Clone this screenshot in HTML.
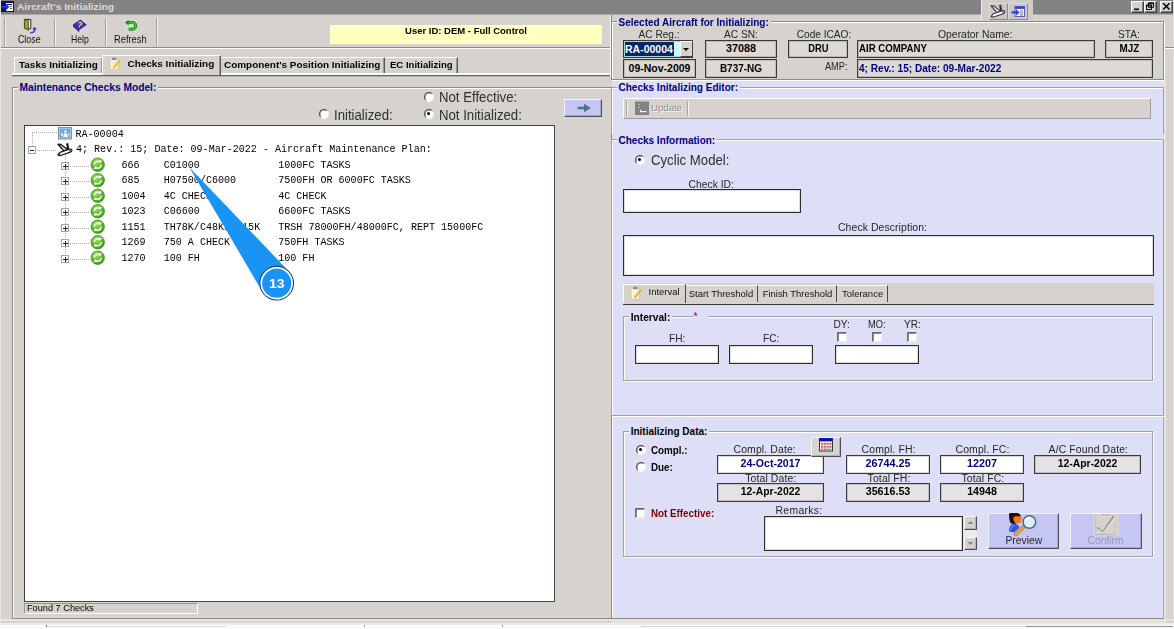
<!DOCTYPE html>
<html>
<head>
<meta charset="utf-8">
<title>Aircraft's Initializing</title>
<style>
html,body{margin:0;padding:0;}
body{opacity:0.999;width:1174px;height:629px;overflow:hidden;position:relative;background:#d6d3ce;font-family:"Liberation Sans",sans-serif;font-size:10px;color:#000;}
.a{position:absolute;box-sizing:border-box;}
.t{position:absolute;white-space:pre;line-height:12px;}
.b{font-weight:bold;}
.nv{color:#000080;}
.lbl{font-size:10.15px;color:#262626;}
.big{font-size:13.2px;color:#303030;transform:scaleY(1.12);transform-origin:0 78%;}
.mono{font-family:"Liberation Mono",monospace;font-size:10.05px;line-height:12px;color:#000;}
.fld{position:absolute;box-sizing:border-box;border:1px solid #3a3a3a;box-shadow:inset 0 0 0 1px rgba(40,40,40,0.18);background:#dddad5;font-weight:bold;font-size:10.3px;text-align:center;white-space:pre;overflow:hidden;}
.fldw{background:#fff;color:#000080;}
.inp{position:absolute;box-sizing:border-box;border:1px solid #2c2c2c;background:#fff;box-shadow:inset 0 0 0 1px rgba(40,40,40,0.16);}
.grp{position:absolute;box-sizing:border-box;border:1px solid #8c8a86;box-shadow:1px 1px 0 #fff, inset 1px 1px 0 #fff;}
.radio{position:absolute;width:10px;height:10px;border-radius:50%;box-sizing:border-box;background:#fff;border:1.4px solid #4a4a4a;border-right-color:#f4f4f4;border-bottom-color:#f4f4f4;transform:rotate(0deg);box-shadow:inset 0.6px 0.6px 0 #8a8a8a;}
.radio.on:after{content:"";position:absolute;left:2px;top:2px;width:3.2px;height:3.2px;border-radius:50%;background:#000;}
.chk{position:absolute;width:10px;height:10px;box-sizing:border-box;background:#fff;border:1px solid #6c6c6c;border-right-color:#ececf4;border-bottom-color:#ececf4;box-shadow:inset 1px 1px 0 rgba(40,40,40,0.55);}
.vsep{position:absolute;width:1px;background:#9e9c98;box-shadow:1px 0 0 #f6f5f3;}
.hsep{position:absolute;height:1px;background:#8c8a86;box-shadow:0 1px 0 #fff;}
.btn{position:absolute;box-sizing:border-box;background:#c6c6f5;border:1px solid #f4f4fc;border-right-color:#4c4c5a;border-bottom-color:#4c4c5a;box-shadow:inset -1px -1px 0 rgba(110,110,140,0.35);}
.tab{position:absolute;box-sizing:border-box;font-weight:bold;font-size:9.95px;white-space:pre;line-height:12px;}
.tb{font-size:10.2px;transform-origin:0 0;color:#111;}
.tabbox{border:1px solid #fff;border-right-color:#5a5854;border-bottom:none;box-shadow:inset -1px 0 0 #9a9894;}
.tabbox.sel{background:#d6d3ce;}
.wc{position:absolute;top:1px;width:13px;height:12px;box-sizing:border-box;background:#d6d3ce;border:1px solid #fff;border-right-color:#404040;border-bottom-color:#404040;box-shadow:inset -1px -1px 0 #808080;}
.wc svg{position:absolute;left:0;top:0;}
.bx{font-size:10.9px !important;transform:scaleX(0.9);transform-origin:0 50%;}
.l2{font-size:10.45px;letter-spacing:0.12px;}
.lv{border-color:#a0a0aa;}
</style>
</head>
<body>
<!-- TITLE BAR -->
<div class="a" id="titlebar" style="left:0;top:0;width:1174px;height:14px;background:#848284;border-bottom:1px solid #aaa8a6;height:15px;"></div>
<svg class="a" style="left:1px;top:1px;" width="13" height="11" viewBox="0 0 13 11"><rect x="0" y="0" width="13" height="11" fill="#10106a"/><rect x="5" y="2" width="7" height="8" fill="#fff"/><rect x="6" y="3" width="5" height="1" fill="#10106a"/><rect x="9" y="5" width="2" height="1" fill="#555"/><rect x="9" y="7" width="2" height="1" fill="#555"/><path d="M0.800 4.800h4.200V2.800l3.400 3.200-3.400 3.200V7.200H0.800z" fill="#1c30d8"/></svg>
<div class="t b" style="left:17px;top:0px;font-size:9.700px;line-height:14px;color:#dedcd8;transform:scaleX(1.052);transform-origin:0 0;">Aircraft's Initializing</div>

<div class="a" style="left:1173px;top:0;width:1px;height:625px;background:#e4e2e0;"></div>
<!-- TOOLBAR -->
<div class="hsep" style="left:0;top:47px;width:611px;"></div>
<div class="hsep" style="left:1165px;top:47px;width:9px;"></div>
<div class="vsep" style="left:4px;top:18px;height:28px;"></div>
<div class="vsep" style="left:54px;top:18px;height:28px;"></div>
<div class="vsep" style="left:105px;top:18px;height:28px;"></div>
<div class="vsep" style="left:156px;top:18px;height:28px;"></div>
<div class="t tb" style="left:17.5px;top:34px;transform:scaleX(0.865);">Close</div>
<div class="t tb" style="left:70.8px;top:34px;transform:scaleX(0.85);">Help</div>
<div class="t tb" style="left:114px;top:34px;transform:scaleX(0.915);">Refresh</div>


<svg class="a" style="left:20px;top:17px;" width="20" height="17" viewBox="20 17 20 17"><path d="M25 19.4h5.800v9.200h-5.800z" fill="#fbfbf6" stroke="#161616" stroke-width="0.900"/><path d="M24.400 19.200l4 1.300v9.900l-4-2.400z" fill="#8e8e1e" stroke="#3c3c08" stroke-width="0.700" stroke-linejoin="round"/><path d="M25.200 20.600l2.400 0.800v7.600l-2.400-1.400z" fill="#a4a432"/><path d="M30.200 32q3.400 0.400 3.600-2.600h-1.500l2.300-2.600 2.300 2.600h-1.500q-0.200 4.200-5.200 3.800z" fill="#2e3ed2"/></svg>
<svg class="a" style="left:70px;top:17px;" width="20" height="17" viewBox="70 17 20 17"><path d="M73 24.5l7.5-5 6.5 5.5-7.5 5.2z" fill="#3a22a8"/><path d="M73 24.5l6.5 5.7v2.2l-6.5-5.8z" fill="#2a1880"/><path d="M79.5 30.2l7.5-5.2v2l-7.5 5.4z" fill="#f4f4fc"/><path d="M79.5 31.6l7.5-5.2" stroke="#8a8ab0" stroke-width="0.5"/><path d="M75.5 24.2l5-3.4 4.4 3.7-5 3.5z" fill="#4c34c4"/><text x="77.600" y="27.600" font-family="Liberation Sans, sans-serif" font-weight="bold" font-size="8.2" fill="#ffe838" transform="rotate(10 80 24)">?</text></svg>
<svg class="a" style="left:123px;top:18px;" width="16" height="15" viewBox="123 18 16 15"><rect x="124" y="19" width="13.6" height="13.4" fill="#dad7d2"/><path d="M127.5 22.6h5a3.3 3.3 0 0 1 0 6.6h-3.8" fill="none" stroke="#1a7a1a" stroke-width="3"/><path d="M127.5 22.6h5a3.3 3.3 0 0 1 0 6.6h-3.8" fill="none" stroke="#2ed02e" stroke-width="1.6"/><path d="M125 22.6l3.6-2.8v5.6z" fill="#1a8a1a"/></svg>
<!-- yellow user box -->
<div class="a" style="left:330px;top:25px;width:272px;height:19px;background:#ffffc0;"></div>
<div class="t b" style="left:330px;top:25px;width:272px;text-align:center;font-size:9.5px;">User ID: DEM - Full Control</div>

<!-- MAIN TABS -->
<div class="a" style="left:12px;top:73px;width:599px;height:2px;background:#fff;border-bottom:1px solid #62605c;box-sizing:content-box;box-shadow:0 1px 0 #b4b2ae;"></div>
<div class="a tabbox" style="left:14px;top:57px;width:89px;height:16px;"></div>
<div class="a tabbox sel" style="left:102px;top:55px;width:119px;height:20px;"></div>
<div class="a tabbox" style="left:221px;top:57px;width:164px;height:16px;border-left:none;"></div>
<div class="a tabbox" style="left:385px;top:57px;width:73px;height:16px;border-left:none;"></div>
<div class="tab" style="left:19px;top:59px;">Tasks Initializing</div>
<div class="tab" style="left:127.5px;top:58px;">Checks Initializing</div>
<div class="tab" style="left:224px;top:59px;">Component's Position Initializing</div>
<div class="tab" style="left:390px;top:59px;font-size:9.55px;">EC Initializing</div>

<svg class="a" style="left:109px;top:56.5px;" width="12" height="13" viewBox="0 0 12 13"><rect x="1" y="2" width="8.5" height="10.5" fill="#fdf6e0" stroke="#e8c880" stroke-width="1"/><rect x="3" y="0.8" width="4.5" height="2.2" fill="#8a8a9a"/><path d="M4.5 9.5l5.5-6.5 1.4 1.1-5.4 6.6-2 0.6z" fill="#f0c040" stroke="#d8a020" stroke-width="0.4"/><path d="M3 7h3M3 5h4" stroke="#e0d0a0" stroke-width="0.6"/></svg>
<!-- LEFT GROUP -->
<div class="grp" style="left:12px;top:87px;width:600px;height:532px;"></div>
<div class="t b nv" style="left:17.5px;top:82px;font-size:10.22px;background:#d6d3ce;padding:0 2px;">Maintenance Checks Model:</div>

<div class="radio" style="left:424px;top:92px;"></div>
<div class="t big" style="left:439px;top:92px;">Not Effective:</div>
<div class="radio" style="left:319px;top:109px;"></div>
<div class="t big" style="left:334px;top:110px;">Initialized:</div>
<div class="radio on" style="left:424px;top:109px;"></div>
<div class="t big" style="left:439px;top:110px;">Not Initialized:</div>
<div class="btn" style="left:564px;top:99px;width:38px;height:18px;"><svg width="36" height="16" style="position:absolute;left:0;top:0"><path d="M12.5 6.8h6.5V3.8l7 4.2-7 4.2V9.2h-6.5z" fill="#4a7492"/></svg></div>

<!-- TREE -->
<div class="a" id="tree" style="left:24px;top:125px;width:531px;height:477px;background:#fff;border:1px solid #404040;border-right-color:#484848;border-bottom-color:#484848;"></div>
<div class="t mono" style="left:75.5px;top:129px;">RA-00004</div>
<div class="t mono" style="left:76px;top:144px;">4; Rev.: 15; Date: 09-Mar-2022 - Aircraft Maintenance Plan:</div>
<div class="t mono" style="left:121.5px;top:160px;">666    C01000             1000FC TASKS</div>
<div class="t mono" style="left:121.5px;top:175px;">685    H07500/C6000       7500FH OR 6000FC TASKS</div>
<div class="t mono" style="left:121.5px;top:191px;">1004   4C CHECK           4C CHECK</div>
<div class="t mono" style="left:121.5px;top:206px;">1023   C06600             6600FC TASKS</div>
<div class="t mono" style="left:121.5px;top:222px;">1151   TH78K/C48K/RP15K   TRSH 78000FH/48000FC, REPT 15000FC</div>
<div class="t mono" style="left:121.5px;top:237px;">1269   750 A CHECK        750FH TASKS</div>
<div class="t mono" style="left:121.5px;top:253px;">1270   100 FH             100 FH</div>
<svg class="a" style="left:24px;top:125px;" width="200" height="150" viewBox="24 125 200 150">
<path d="M32 132.5H58 M32.5 133V147" stroke="#b0b0b0" stroke-width="1" stroke-dasharray="1 1" fill="none"/>
<path d="M37 150.5H57" stroke="#b0b0b0" stroke-width="1" stroke-dasharray="1 1" fill="none"/>
<path d="M65.5 155V258.4" stroke="#b0b0b0" stroke-width="1" stroke-dasharray="1 1" fill="none"/>
<path d="M70 166.5H90" stroke="#b0b0b0" stroke-width="1" stroke-dasharray="1 1" fill="none"/>
<path d="M70 181.5H90" stroke="#b0b0b0" stroke-width="1" stroke-dasharray="1 1" fill="none"/>
<path d="M70 197.5H90" stroke="#b0b0b0" stroke-width="1" stroke-dasharray="1 1" fill="none"/>
<path d="M70 212.5H90" stroke="#b0b0b0" stroke-width="1" stroke-dasharray="1 1" fill="none"/>
<path d="M70 228.5H90" stroke="#b0b0b0" stroke-width="1" stroke-dasharray="1 1" fill="none"/>
<path d="M70 243.5H90" stroke="#b0b0b0" stroke-width="1" stroke-dasharray="1 1" fill="none"/>
<path d="M70 259.5H90" stroke="#b0b0b0" stroke-width="1" stroke-dasharray="1 1" fill="none"/>
<rect x="28.5" y="146.5" width="7" height="7" fill="#fff" stroke="#a4a4a4"/><path d="M30 150.5h4" stroke="#222" stroke-width="1"/>
<rect x="61.5" y="162.5" width="7" height="7" fill="#fff" stroke="#a4a4a4"/><path d="M63 166.5h5M65.5 164v5" stroke="#222" stroke-width="1"/>
<rect x="61.5" y="177.5" width="7" height="7" fill="#fff" stroke="#a4a4a4"/><path d="M63 181.5h5M65.5 179v5" stroke="#222" stroke-width="1"/>
<rect x="61.5" y="193.5" width="7" height="7" fill="#fff" stroke="#a4a4a4"/><path d="M63 197.5h5M65.5 195v5" stroke="#222" stroke-width="1"/>
<rect x="61.5" y="208.5" width="7" height="7" fill="#fff" stroke="#a4a4a4"/><path d="M63 212.5h5M65.5 210v5" stroke="#222" stroke-width="1"/>
<rect x="61.5" y="224.5" width="7" height="7" fill="#fff" stroke="#a4a4a4"/><path d="M63 228.5h5M65.5 226v5" stroke="#222" stroke-width="1"/>
<rect x="61.5" y="239.5" width="7" height="7" fill="#fff" stroke="#a4a4a4"/><path d="M63 243.5h5M65.5 241v5" stroke="#222" stroke-width="1"/>
<rect x="61.5" y="255.5" width="7" height="7" fill="#fff" stroke="#a4a4a4"/><path d="M63 259.5h5M65.5 257v5" stroke="#222" stroke-width="1"/>
<rect x="58.5" y="127.5" width="13" height="11.5" fill="#9ec4ec" stroke="#8c8c94"/><rect x="60" y="129" width="10" height="8.5" fill="#6ea6e0"/><path d="M63 137l1.5-4h2l1.5 4z M64.3 130.5h2.4v2h-2.4z" fill="#f4f8ff"/><path d="M61 133h2v3h-2z M68 133.5h1.5v2h-1.5z" fill="#dce8f8"/>
<path d="M58 144.2l3 0.3 6.4 5-3.4 1.6z" fill="#dcdcdc" stroke="#161616" stroke-width="1.3" stroke-linejoin="round"/><path d="M66.2 143.4l2-0.4 1 6-2.2 0.8z" fill="#161616"/><path d="M58 155l2-2.6 9.2-3.3q2.8-0.4 2.7 1.3-0.2 1.4-2.2 1.9l-9.2 3.2z" fill="#fff" stroke="#161616" stroke-width="1.3" stroke-linejoin="round"/><circle cx="69.8" cy="150.6" r="1" fill="#5a4ab0"/>
<circle cx="97.7" cy="164.7" r="6.7" fill="url(#gg)" stroke="#3c8a1e" stroke-width="0.8"/>
<g transform="translate(97.7 164.7)" fill="none" stroke="#fff" stroke-width="1.5" stroke-linecap="round"><path d="M-3.4 -0.6a3.4 3.4 0 0 1 5.6 -2"/><path d="M3.4 0.6a3.4 3.4 0 0 1 -5.6 2"/></g>
<g transform="translate(97.7 164.7)" fill="#fff"><path d="M1.2 -4.6l3.2 0.6-2.4 2.4z"/><path d="M-1.2 4.6l-3.2-0.6 2.4-2.4z"/></g>
<circle cx="97.7" cy="180.2" r="6.7" fill="url(#gg)" stroke="#3c8a1e" stroke-width="0.8"/>
<g transform="translate(97.7 180.2)" fill="none" stroke="#fff" stroke-width="1.5" stroke-linecap="round"><path d="M-3.4 -0.6a3.4 3.4 0 0 1 5.6 -2"/><path d="M3.4 0.6a3.4 3.4 0 0 1 -5.6 2"/></g>
<g transform="translate(97.7 180.2)" fill="#fff"><path d="M1.2 -4.6l3.2 0.6-2.4 2.4z"/><path d="M-1.2 4.6l-3.2-0.6 2.4-2.4z"/></g>
<circle cx="97.7" cy="195.7" r="6.7" fill="url(#gg)" stroke="#3c8a1e" stroke-width="0.8"/>
<g transform="translate(97.7 195.7)" fill="none" stroke="#fff" stroke-width="1.5" stroke-linecap="round"><path d="M-3.4 -0.6a3.4 3.4 0 0 1 5.6 -2"/><path d="M3.4 0.6a3.4 3.4 0 0 1 -5.6 2"/></g>
<g transform="translate(97.7 195.7)" fill="#fff"><path d="M1.2 -4.6l3.2 0.6-2.4 2.4z"/><path d="M-1.2 4.6l-3.2-0.6 2.4-2.4z"/></g>
<circle cx="97.7" cy="211.2" r="6.7" fill="url(#gg)" stroke="#3c8a1e" stroke-width="0.8"/>
<g transform="translate(97.7 211.2)" fill="none" stroke="#fff" stroke-width="1.5" stroke-linecap="round"><path d="M-3.4 -0.6a3.4 3.4 0 0 1 5.6 -2"/><path d="M3.4 0.6a3.4 3.4 0 0 1 -5.6 2"/></g>
<g transform="translate(97.7 211.2)" fill="#fff"><path d="M1.2 -4.6l3.2 0.6-2.4 2.4z"/><path d="M-1.2 4.6l-3.2-0.6 2.4-2.4z"/></g>
<circle cx="97.7" cy="226.7" r="6.7" fill="url(#gg)" stroke="#3c8a1e" stroke-width="0.8"/>
<g transform="translate(97.7 226.7)" fill="none" stroke="#fff" stroke-width="1.5" stroke-linecap="round"><path d="M-3.4 -0.6a3.4 3.4 0 0 1 5.6 -2"/><path d="M3.4 0.6a3.4 3.4 0 0 1 -5.6 2"/></g>
<g transform="translate(97.7 226.7)" fill="#fff"><path d="M1.2 -4.6l3.2 0.6-2.4 2.4z"/><path d="M-1.2 4.6l-3.2-0.6 2.4-2.4z"/></g>
<circle cx="97.7" cy="242.2" r="6.7" fill="url(#gg)" stroke="#3c8a1e" stroke-width="0.8"/>
<g transform="translate(97.7 242.2)" fill="none" stroke="#fff" stroke-width="1.5" stroke-linecap="round"><path d="M-3.4 -0.6a3.4 3.4 0 0 1 5.6 -2"/><path d="M3.4 0.6a3.4 3.4 0 0 1 -5.6 2"/></g>
<g transform="translate(97.7 242.2)" fill="#fff"><path d="M1.2 -4.6l3.2 0.6-2.4 2.4z"/><path d="M-1.2 4.6l-3.2-0.6 2.4-2.4z"/></g>
<circle cx="97.7" cy="257.7" r="6.7" fill="url(#gg)" stroke="#3c8a1e" stroke-width="0.8"/>
<g transform="translate(97.7 257.7)" fill="none" stroke="#fff" stroke-width="1.5" stroke-linecap="round"><path d="M-3.4 -0.6a3.4 3.4 0 0 1 5.6 -2"/><path d="M3.4 0.6a3.4 3.4 0 0 1 -5.6 2"/></g>
<g transform="translate(97.7 257.7)" fill="#fff"><path d="M1.2 -4.6l3.2 0.6-2.4 2.4z"/><path d="M-1.2 4.6l-3.2-0.6 2.4-2.4z"/></g>
<defs><radialGradient id="gg" cx="0.4" cy="0.3" r="0.75"><stop offset="0" stop-color="#a6e25a"/><stop offset="0.55" stop-color="#5cbf2a"/><stop offset="1" stop-color="#3a9a1c"/></radialGradient></defs>
</svg>
<svg class="a" style="left:170px;top:150px;" width="140" height="160" viewBox="170 150 140 160"><path d="M189.3 167.2L290.2 272.8L263.2 293.2Z" fill="#1994f4"/><circle cx="276.7" cy="283.2" r="16.9" fill="#1994f4" stroke="#2a3a4a" stroke-width="1"/><circle cx="276.7" cy="283.2" r="15.4" fill="none" stroke="#fff" stroke-width="1.6"/><text x="276.7" y="287.8" text-anchor="middle" font-family="Liberation Sans, sans-serif" font-weight="bold" font-size="12.6" fill="#fff" textLength="15.6" lengthAdjust="spacingAndGlyphs">13</text></svg>

<!-- status -->
<div class="a" style="left:24px;top:603px;width:174px;height:11px;border:1px solid #9a9894;border-right-color:#fff;border-bottom-color:#fff;"></div>
<div class="t" style="left:27px;top:602px;font-size:9.2px;">Found 7 Checks</div>

<!-- RIGHT PANEL -->
<div class="a" id="rpanel" style="left:612px;top:80px;width:552px;height:538px;background:#dedef6;"></div>

<!-- RIGHT TOP: Selected aircraft -->
<div class="a" style="left:611px;top:15px;width:1px;height:8px;background:#8c8a86;"></div>
<div class="a" style="left:610px;top:15px;width:1px;height:62px;background:#f4f3f0;"></div>
<div class="a" style="left:981px;top:0;width:52px;height:21px;background:#d0cdc9;border-left:1px solid #f0eeec;"></div>
<div class="a" style="left:989px;top:3px;width:19px;height:17px;background:#cbc8c5;border:1px solid #dcdad6;border-right-color:#8e8c8a;border-bottom-color:#8e8c8a;"></div>
<div class="a" style="left:1008px;top:3px;width:20px;height:17px;background:#cbc8c5;border:1px solid #dcdad6;border-right-color:#8e8c8a;border-bottom-color:#8e8c8a;"></div>
<svg class="a" style="left:989px;top:3px;" width="19" height="17" viewBox="989 3 19 17"><g transform="translate(933 -138.4)"><path d="M58 144.2l3 0.3 6.4 5-3.4 1.600z" fill="#e4e4e4" stroke="#3a3a3a" stroke-width="1.100" stroke-linejoin="round"/><path d="M66.200 143.400l2-0.400 1 6-2.200 0.800z" fill="#3a3a3a"/><path d="M58 155l2-2.600 9.200-3.300q2.800-0.400 2.700 1.300-0.200 1.400-2.200 1.900l-9.200 3.200z" fill="#fbfbfb" stroke="#3a3a3a" stroke-width="1.100" stroke-linejoin="round"/><circle cx="69.800" cy="150.600" r="1" fill="#6a5ab8"/></g></svg>
<svg class="a" style="left:1011px;top:6px;" width="14" height="11" viewBox="0 0 14 11"><rect x="4" y="0.5" width="9.5" height="10" fill="#f0f0fa" stroke="#5a62b0"/><rect x="4" y="0.5" width="9.5" height="2.4" fill="#3a48c0"/><path d="M9 5h3M9 7h3M9 9h3" stroke="#6a6a9a" stroke-width="0.9"/><path d="M0.5 5.2h4.4V3l3.6 3.4-3.6 3.4V7.6H0.5z" fill="#2a44d8"/></svg>

<div class="grp" style="left:611px;top:21px;width:553px;height:59px;"></div>
<div class="t b nv" style="left:616.5px;top:17px;font-size:10px;background:#d6d3ce;padding:0 2px;">Selected Aircraft for Initializing:</div>
<div class="t lbl" style="left:638.5px;top:29px;">AC Reg.:</div>
<div class="t lbl" style="left:724px;top:29px;">AC SN:</div>
<div class="t lbl" style="left:796.7px;top:29px;">Code ICAO:</div>
<div class="t lbl" style="left:938px;top:29px;font-size:10.4px;">Operator Name:</div>
<div class="t lbl" style="left:1118px;top:29px;">STA:</div>
<div class="t lbl" style="left:797px;width:50.5px;text-align:right;top:61px;transform:scaleX(0.91);transform-origin:100% 50%;">AMP:</div>

<div class="fld" style="left:623px;top:40px;width:70px;height:18px;background:#c4ffff;text-align:left;line-height:16px;font-size:10.5px;"><span style="background:#0a246a;color:#fff;display:inline-block;height:14px;line-height:14px;margin:1px 0 0 1px;padding:0 1px 0 0;">RA-00004</span></div>
<div class="a" style="left:680px;top:41px;width:13px;height:16px;background:#d6d3ce;border:1px solid #fff;border-right-color:#404040;border-bottom-color:#404040;"><svg width="10" height="14" style="position:absolute;left:0;top:0"><path d="M2 6h6l-3 3z" fill="#000"/></svg></div>
<div class="fld" style="left:705px;top:40px;width:72px;height:18px;line-height:15px;font-size:10.8px;">37088</div>
<div class="fld" style="left:788px;top:40px;width:60px;height:18px;line-height:15px;font-size:10.4px;"><span style="display:inline-block;transform:scaleX(0.9);">DRU</span></div>
<div class="fld" style="left:857px;top:40px;width:238px;height:18px;line-height:15px;text-align:left;padding-left:1px;font-size:10.4px;"><span style="display:inline-block;transform:scaleX(0.93);transform-origin:0 50%;">AIR COMPANY</span></div>
<div class="fld" style="left:1105px;top:40px;width:48px;height:18px;line-height:15px;font-size:10.4px;"><span style="display:inline-block;transform:scaleX(0.95);">MJZ</span></div>
<div class="fld" style="left:623px;top:59px;width:73px;height:19px;line-height:17px;font-size:10.5px;">09-Nov-2009</div>
<div class="fld" style="left:705px;top:59px;width:72px;height:19px;line-height:17px;font-size:10px;">B737-NG</div>
<div class="fld nv" style="left:857px;top:59px;width:296px;height:19px;line-height:17px;text-align:left;padding-left:1px;font-size:10.1px;">4; Rev.: 15; Date: 09-Mar-2022</div>

<!-- window controls -->
<div class="wc" style="left:1130.5px;"><svg width="11" height="9"><rect x="2" y="6.5" width="5" height="1.6" fill="#000"/></svg></div>
<div class="wc" style="left:1144px;"><svg width="11" height="9"><path d="M3.5 0.8h5v4.5h-5z M3.5 1.6h5 M1.5 3h5v4.5h-5z M1.5 3.8h5" fill="none" stroke="#000" stroke-width="1"/></svg></div>
<div class="wc" style="left:1159.5px;"><svg width="11" height="9"><path d="M2.2 1.2l6.3 6.3M8.5 1.2l-6.3 6.3" stroke="#000" stroke-width="1.5" fill="none"/></svg></div>

<!-- Editor group -->
<div class="grp lv" style="left:611px;top:87px;width:553px;height:47px;border-bottom:none;box-shadow:inset 1px 1px 0 #fff;"></div>
<div class="t b nv" style="left:616.5px;top:82px;font-size:10px;background:#dedef6;padding:0 2px;">Checks Initalizing Editor:</div>
<div class="a" style="left:623px;top:98px;width:528px;height:21px;background:#d6d3ce;border:1px solid #fff;border-right-color:#9c9aa8;border-bottom-color:#9c9aa8;"></div>
<div class="vsep" style="left:626px;top:101px;height:15px;background:#a8a6a2;"></div>
<div class="vsep" style="left:687px;top:101px;height:15px;background:#a8a6a2;"></div>
<svg class="a" style="left:635px;top:101px;" width="14" height="14" viewBox="0 0 14 14"><rect x="0" y="0.5" width="14" height="13.5" fill="#828282"/><rect x="3.5" y="3" width="1" height="1" fill="#e8e8e8"/><rect x="3.5" y="6" width="1" height="1" fill="#e8e8e8"/><rect x="5" y="10" width="6.5" height="1.2" fill="#f4f4f4"/><rect x="5" y="8.5" width="1" height="2" fill="#f4f4f4"/></svg>
<div class="t" style="left:651px;top:102px;font-size:9.6px;color:#8e8c8a;text-shadow:1px 1px 0 #fff;">Update</div>

<!-- Checks Information -->
<div class="grp lv" style="left:611px;top:139px;width:553px;height:277px;"></div>
<div class="a" style="left:611px;top:416px;width:1px;height:203px;background:#8c8a86;"></div>
<div class="a" style="left:612px;top:417px;width:1px;height:201px;background:#fbfbff;"></div><div class="a" style="left:1163px;top:417px;width:1px;height:201px;background:#a4a4b0;"></div><div class="a" style="left:1164px;top:80px;width:2px;height:539px;background:#e6e4e2;"></div>
<div class="a" style="left:612px;top:618px;width:552px;height:1px;background:#8c8a86;"></div>
<div class="t b nv" style="left:616.5px;top:135px;font-size:10px;background:#dedef6;padding:0 2px;">Checks Information:</div>
<div class="radio on" style="left:635px;top:155px;"></div>
<div class="t big" style="left:651px;top:155px;">Cyclic Model:</div>
<div class="t lbl" style="left:688.6px;top:179px;font-size:10.3px;">Check ID:</div>
<div class="inp" style="left:623px;top:189px;width:178px;height:24px;"></div>
<div class="t lbl" style="left:838px;top:222px;font-size:10.45px;letter-spacing:0.08px;">Check Description:</div>
<div class="inp" style="left:623px;top:235px;width:531px;height:41px;"></div>

<!-- sub tabs -->
<div class="a" style="left:623px;top:283px;width:531px;height:22px;background:#d6d3ce;border-bottom:1px solid #3c3c3c;"></div>
<div class="a" style="left:623px;top:284px;width:63px;height:19px;border:1px solid #fff;border-right-color:#4a4844;border-bottom:none;"></div>
<div class="a" style="left:686px;top:285px;width:72px;height:17px;border-top:1px solid #fff;border-right:1px solid #4a4844;"></div>
<div class="a" style="left:758px;top:285px;width:79px;height:17px;border-top:1px solid #fff;border-right:1px solid #4a4844;"></div>
<div class="a" style="left:837px;top:285px;width:51px;height:17px;border-top:1px solid #fff;border-right:1px solid #4a4844;"></div>
<svg class="a" style="left:630px;top:286px;" width="12" height="14" viewBox="0 0 12 13" preserveAspectRatio="none"><rect x="1" y="2" width="8.5" height="10.5" fill="#fdf6e0" stroke="#e8c880" stroke-width="1"/><rect x="3" y="0.8" width="4.5" height="2.2" fill="#8a8a9a"/><path d="M4.5 9.5l5.5-6.5 1.4 1.1-5.4 6.6-2 0.6z" fill="#f0c040" stroke="#d8a020" stroke-width="0.4"/></svg>
<div class="t" style="left:648.6px;top:286px;font-size:9.45px;color:#111;">Interval</div>
<div class="t" style="left:688.8px;top:288px;font-size:9.45px;color:#111;">Start Threshold</div>
<div class="t" style="left:762.7px;top:288px;font-size:9.45px;color:#111;">Finish Threshold</div>
<div class="t" style="left:842px;top:288px;font-size:9.5px;color:#111;">Tolerance</div>

<!-- Interval group -->
<div class="grp lv" style="left:623px;top:316px;width:530px;height:65px;"></div>
<div class="t b" style="left:628.7px;top:311.5px;font-size:10.2px;background:#dedef6;padding:0 2px;">Interval:</div>
<div class="t b" style="left:693px;top:310px;width:14px;height:12px;background:#dedef6;color:#e8203a;font-size:10px;line-height:14px;text-align:left;padding-left:0.5px;">*</div>
<div class="t lbl" style="left:669px;top:333px;">FH:</div>
<div class="t lbl" style="left:763px;top:333px;">FC:</div>
<div class="t lbl" style="left:833.5px;top:319px;">DY:</div>
<div class="t lbl" style="left:868.3px;top:319px;transform:scaleX(0.92);transform-origin:0 50%;">MO:</div>
<div class="t lbl" style="left:904px;top:319px;">YR:</div>
<div class="chk" style="left:837px;top:332px;"></div>
<div class="chk" style="left:872px;top:332px;"></div>
<div class="chk" style="left:907px;top:332px;"></div>
<div class="inp" style="left:635px;top:345px;width:84px;height:19px;"></div>
<div class="inp" style="left:729px;top:345px;width:84px;height:19px;"></div>
<div class="inp" style="left:835px;top:345px;width:84px;height:19px;"></div>

<!-- Initializing Data -->
<div class="grp lv" style="left:623px;top:431px;width:530px;height:126px;"></div>
<div class="t b" style="left:628.7px;top:426px;font-size:10px;background:#dedef6;padding:0 2px;">Initializing Data:</div>
<div class="radio on" style="left:636px;top:444.5px;"></div>
<div class="t b bx" style="left:650.6px;top:444px;">Compl.:</div>
<div class="radio" style="left:636px;top:462px;"></div>
<div class="t b bx" style="left:650.6px;top:461px;">Due:</div>
<div class="t lbl l2" style="left:733.5px;top:444px;">Compl. Date:</div>
<div class="t lbl l2" style="left:861.6px;top:444px;">Compl. FH:</div>
<div class="t lbl l2" style="left:955.5px;top:444px;">Compl. FC:</div>
<div class="t lbl l2" style="left:1048.6px;top:444px;">A/C Found Date:</div>
<div class="t lbl l2" style="left:745.2px;top:472.5px;">Total Date:</div>
<div class="t lbl l2" style="left:867.6px;top:472.5px;">Total FH:</div>
<div class="t lbl l2" style="left:961.5px;top:472.5px;">Total FC:</div>
<div class="fld fldw" style="left:717px;top:455px;width:107px;height:19px;line-height:15px;font-size:10.55px;">24-Oct-2017</div>
<div class="fld fldw" style="left:846px;top:455px;width:84px;height:19px;line-height:15px;font-size:10.75px;">26744.25</div>
<div class="fld fldw" style="left:940px;top:455px;width:84px;height:19px;line-height:15px;font-size:10.75px;">12207</div>
<div class="fld" style="left:1034px;top:455px;width:107px;height:19px;line-height:15px;background:#e4e2e4;font-size:10.4px;">12-Apr-2022</div>
<div class="fld" style="left:717px;top:483px;width:107px;height:19px;line-height:15px;background:#e4e2e4;font-size:10.4px;">12-Apr-2022</div>
<div class="fld" style="left:846px;top:483px;width:84px;height:19px;line-height:15px;background:#e4e2e4;font-size:10.7px;">35616.53</div>
<div class="fld" style="left:940px;top:483px;width:84px;height:19px;line-height:15px;background:#e4e2e4;font-size:10.7px;">14948</div>
<div class="btn" style="left:811px;top:437px;width:30px;height:20px;background:#d6d3ce;"><svg width="14" height="13.500" viewBox="0 0 15 14" preserveAspectRatio="none" style="position:absolute;left:7px;top:0.200px;"><rect x="0.5" y="0.5" width="14" height="13" fill="#fff" stroke="#2a2a32"/><rect x="0.5" y="0.5" width="14" height="3" fill="#0a0ac8"/><path d="M2 5h2.4v2H2zM5 5h2.4v2H5zM8 5h2.4v2H8zM11 5h2.4v2H11zM2 8h2.4v2H2zM5 8h2.4v2H5zM8 8h2.4v2H8zM11 8h2.4v2H11zM2 11h2.4v1.6H2zM5 11h2.4v1.6H5zM8 11h2.4v1.6H8z" fill="#c46060"/><path d="M11 11h2.4v1.6H11z" fill="#8a8a8a"/></svg></div>
<div class="chk" style="left:635px;top:508px;"></div>
<div class="t b bx" style="left:650.6px;top:507px;color:#800000;">Not Effective:</div>
<div class="t lbl l2" style="left:775.5px;top:505px;letter-spacing:0.3px;">Remarks:</div>
<div class="inp" style="left:764px;top:516px;width:199px;height:35px;"></div>
<div class="a" style="left:964px;top:517px;width:13px;height:33px;background:#ebe9ea;"></div>
<div class="btn" style="left:964px;top:516px;width:13px;height:14px;background:#d6d3ce;"><svg width="11" height="11" style="position:absolute;left:0;top:0"><path d="M2.5 7h6l-3-3z" fill="#8a8884"/></svg></div>
<div class="btn" style="left:964px;top:537px;width:13px;height:13px;background:#d6d3ce;"><svg width="11" height="11" style="position:absolute;left:0;top:0"><path d="M2.5 4h6l-3 3z" fill="#8a8884"/></svg></div>
<div class="btn" style="left:988px;top:513px;width:71px;height:36px;"></div>
<div class="btn" style="left:1070px;top:513px;width:72px;height:36px;"></div>
<svg class="a" style="left:1005px;top:513px;" width="36" height="24" viewBox="1005 513 36 24"><path d="M1009 514.2q0-1.2 1.2-1.2h8l2.2 2-1 6-5 3.6-4-1.6q-1.6-4-1.4-8.800z" fill="#1a1210"/><ellipse cx="1017.6" cy="519" rx="4.2" ry="4.6" fill="#f07a14"/><path d="M1013 514.6l7-0.6 0.6 2.200-6.600 0.400z" fill="#1a1210"/><path d="M1009 531.400c0-4.800 2.200-7.800 5.400-7.800q3.800 0.800 5.200 3.800l-5.400 5.200z" fill="#3454e4"/><path d="M1010.600 530c0.400-2.600 1.800-4.200 3.600-4.600" stroke="#6c8cf8" stroke-width="1.300" fill="none"/><path d="M1023 527.600l-7.400 7" stroke="#c87a20" stroke-width="3.600" stroke-linecap="round"/><path d="M1023 527.600l-7.400 7" stroke="#f4b050" stroke-width="1.800" stroke-linecap="round"/><circle cx="1029.400" cy="522" r="6.300" fill="#d8f0fc" stroke="#54647e" stroke-width="1.500"/><path d="M1025.600 521a4.200 4.200 0 0 1 3.800-3.400" stroke="#fff" stroke-width="1.800" fill="none" stroke-linecap="round"/></svg>
<svg class="a" style="left:1093px;top:514px;" width="26" height="22" viewBox="0 0 26 22"><rect x="0" y="0" width="26" height="22" fill="#d6d3ce"/><path d="M9.5 0v1.6h6.2V0" stroke="#b0aeb0" stroke-width="1.2" fill="none"/><path d="M8.5 2.4h8.4" stroke="#e8e6e2" stroke-width="1"/><path d="M4.2 13.200l5.400 5.200L20.800 2" fill="none" stroke="#a09ea2" stroke-width="2.100"/><path d="M5.600 15.200l4 4.200L21.800 3.800" fill="none" stroke="#f4f2f0" stroke-width="0.900"/><path d="M2.5 1v20M21.8 6v15" stroke="#c8c5c0" stroke-width="1"/><path d="M2.5 20.6h19.5" stroke="#b8b5b0" stroke-width="1"/></svg>

<div class="t lbl" style="left:1005.5px;top:535px;font-size:10.3px;">Preview</div>
<div class="t lbl" style="left:1087.5px;top:535px;font-size:10.3px;color:#9a98ae;">Confirm</div>

<!-- bottom strip -->
<div class="a" style="left:0;top:0;width:1px;height:625px;background:#e8e6e2;"></div>
<div class="a" style="left:0;top:619px;width:1174px;height:2px;background:#e7e5e1;"></div>
<div class="a" style="left:612px;top:621px;width:554px;height:2px;background:#e3e1dd;"></div>
<div class="a" style="left:0;top:623px;width:1174px;height:2px;background:#eeedeb;"></div>
<div class="a" style="left:0;top:625px;width:1174px;height:4px;background:#fbfbfa;"></div>
<div class="a" style="left:46px;top:626px;width:180px;height:1px;background:#dedcd8;"></div>
<div class="a" style="left:641px;top:626px;width:385px;height:1px;background:#d6d5d2;"></div>
<div class="a" style="left:1026px;top:626px;width:147px;height:1px;background:#8e8e8e;"></div>
<div class="a" style="left:46px;top:625px;width:1px;height:2px;background:#777;"></div><div class="a" style="left:364px;top:625px;width:1px;height:2px;background:#999;"></div><div class="a" style="left:502px;top:625px;width:1px;height:2px;background:#999;"></div>
</body>
</html>
